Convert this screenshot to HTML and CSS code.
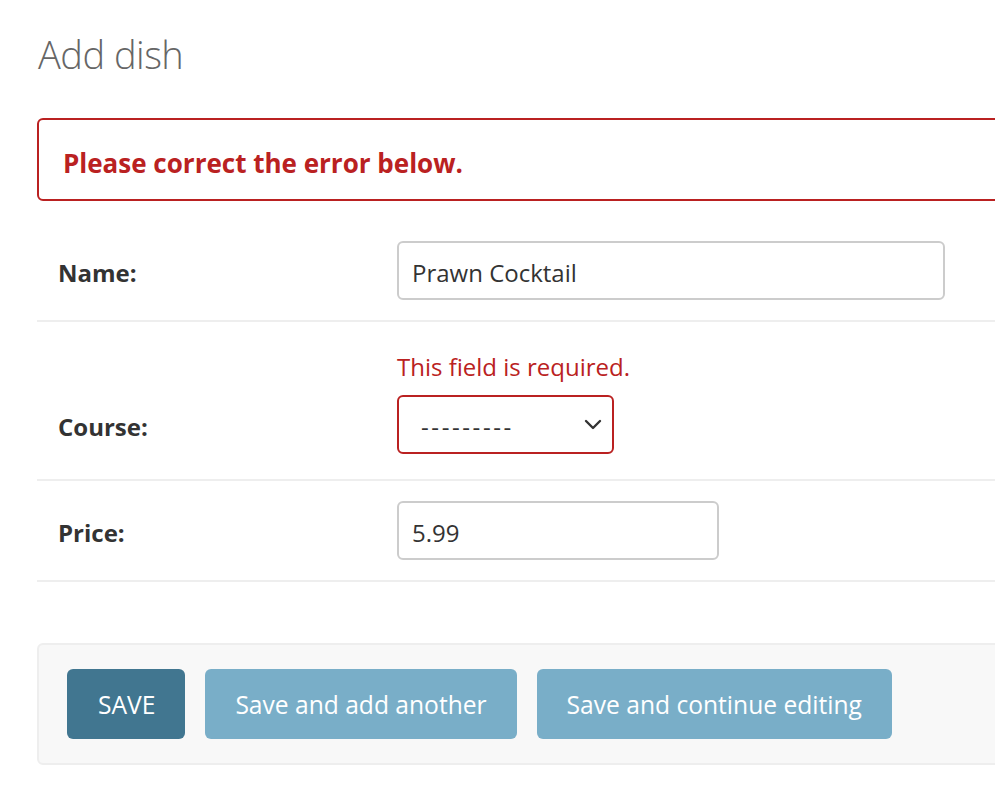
FILE: index.html
```html
<!DOCTYPE html>
<html>
<head>
<meta charset="utf-8">
<link rel="stylesheet" href="styles.css">
</head>
<body>
<div class="content">
  <h1 class="title">Add dish</h1>
  <p class="errornote">Please correct the error below.</p>
  <div class="form-row">
    <div class="flex-row">
      <label class="label">Name:</label>
      <div class="input name-input">Prawn Cocktail</div>
    </div>
  </div>
  <div class="form-row errors">
    <div class="errorlist">This field is required.</div>
    <div class="flex-row">
      <label class="label">Course:</label>
      <div class="select">
        <span class="select-text">---------</span>
        <svg class="chev" width="18" height="12" viewBox="0 0 18 12"><path d="M2 2 L9 9 L16 2" fill="none" stroke="#333" stroke-width="2.4" stroke-linecap="round" stroke-linejoin="round"/></svg>
      </div>
    </div>
  </div>
  <div class="form-row">
    <div class="flex-row">
      <label class="label">Price:</label>
      <div class="input price-input">5.99</div>
    </div>
  </div>
  <div class="submit-row">
    <span class="btn btn-default">SAVE</span>
    <span class="btn">Save and add another</span>
    <span class="btn">Save and continue editing</span>
  </div>
</div>
</body>
</html>
```
FILE: styles.css
```css
html, body {
  margin: 0;
  padding: 0;
  background: #fff;
  font-family: "Open Sans", "Noto Sans", sans-serif;
  color: #333;
  overflow: hidden;
}
.content {
  padding: 28px 0 0 37px;
  width: 1100px;
}
.title {
  margin: 0 0 0 1px;
  font-size: 38px;
  font-weight: 300;
  color: #666;
  line-height: 52px;
  letter-spacing: -0.5px;
}
.errornote {
  margin: 38px 0 20px 0;
  height: 72px;
  box-sizing: content-box;
  border: 2px solid #ba2121;
  border-radius: 6px;
  color: #ba2121;
  font-weight: 700;
  font-size: 26px;
  line-height: 72px;
  padding: 7px 0 0 24px;
}
.form-row {
  padding: 20px 0 20px 21px;
  border-bottom: 2px solid #eee;
}
.flex-row {
  display: flex;
  align-items: center;
}
.label {
  width: 339px;
  font-weight: 700;
  font-size: 24px;
  color: #333;
  padding-top: 4px;
}
.input {
  box-sizing: border-box;
  height: 59px;
  border: 2px solid #ccc;
  border-radius: 6px;
  padding: 4px 13px 0 13px;
  font-size: 24px;
  line-height: 51px;
  color: #333;
}
.name-input { width: 548px; }
.price-input { width: 322px; }
.errors { padding-bottom: 25px; }
.errorlist {
  margin-left: 339px;
  color: #ba2121;
  font-size: 24px;
  line-height: 32px;
  margin-top: 9px;
  margin-bottom: 12px;
}
.select {
  box-sizing: border-box;
  width: 217px;
  height: 59px;
  border: 2px solid #ba2121;
  border-radius: 6px;
  display: flex;
  align-items: center;
  justify-content: space-between;
  padding: 4px 10px 0 22px;
  font-size: 24px;
  color: #333;
}
.select-text { letter-spacing: 2.6px; }
.chev { margin-top: -4px; }
.submit-row {
  margin-top: 61px;
  height: 118px;
  background: #f8f8f8;
  border: 2px solid #eee;
  border-radius: 6px;
  display: flex;
  align-items: center;
  gap: 20px;
  padding-left: 28px;
}
.btn {
  box-sizing: border-box;
  height: 70px;
  display: flex;
  align-items: center;
  padding: 0 30px;
  background: #79aec8;
  color: #fff;
  border-radius: 6px;
  font-size: 24.6px;
}
.btn-default { background: #417690; padding: 0 30px 0 31px; }
```
